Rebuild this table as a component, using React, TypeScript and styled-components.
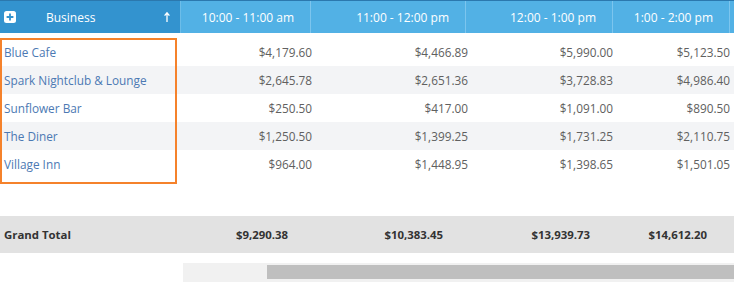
import styled, { createGlobalStyle } from "styled-components";

const GlobalStyle = createGlobalStyle`
  html, body {
    margin: 0;
    padding: 0;
    background: #ffffff;
    font-family: "Open Sans", "Liberation Sans", sans-serif;
  }
`;

const HEAD_COLS = "181px 130px 155px 147px 117px 1fr";
const BODY_COLS = "181px 131px 156px 145px 117px 1fr";

const hours = ["10:00 - 11:00 am", "11:00 - 12:00 pm", "12:00 - 1:00 pm", "1:00 - 2:00 pm"];

const rows = [
  { name: "Blue Cafe", values: ["$4,179.60", "$4,466.89", "$5,990.00", "$5,123.50"] },
  { name: "Spark Nightclub & Lounge", values: ["$2,645.78", "$2,651.36", "$3,728.83", "$4,986.40"] },
  { name: "Sunflower Bar", values: ["$250.50", "$417.00", "$1,091.00", "$890.50"] },
  { name: "The Diner", values: ["$1,250.50", "$1,399.25", "$1,731.25", "$2,110.75"] },
  { name: "Village Inn", values: ["$964.00", "$1,448.95", "$1,398.65", "$1,501.05"] }
];

const totals = ["$9,290.38", "$10,383.45", "$13,939.73", "$14,612.20"];

export default function App() {
  return (
    <>
      <GlobalStyle />
      <Page>
        <HeaderRow>
          <BusinessHead>
            <PlusIcon viewBox="0 0 12 12">
              <rect x="0" y="0" width="12" height="12" rx="2.5" fill="#ffffff" />
              <path d="M6 2.6v6.8M2.6 6h6.8" stroke="#3393cf" strokeWidth="1.8" />
            </PlusIcon>
            <HeadLabel>Business</HeadLabel>
            <SortArrow viewBox="0 0 8 12">
              <path d="M4 11V2.5M1.6 4.6L4 1.8l2.4 2.8" stroke="#ffffff" strokeWidth="1.3" fill="none" />
            </SortArrow>
          </BusinessHead>
          {hours.map((h) => (
            <HourHead key={h}>{h}</HourHead>
          ))}
          <HourHead />
        </HeaderRow>

        <Body>
          {rows.map((r, i) => (
            <DataRow key={r.name} $striped={i % 2 === 1}>
              <NameCell>{r.name}</NameCell>
              {r.values.map((v, j) => (
                <ValueCell key={j}>{v}</ValueCell>
              ))}
              <span />
            </DataRow>
          ))}
          <Highlight />
        </Body>

        <TotalRow>
          <TotalLabel>Grand Total</TotalLabel>
          {totals.map((t) => (
            <TotalValue key={t}>{t}</TotalValue>
          ))}
          <span />
        </TotalRow>

        <ScrollTrack>
          <ScrollThumb />
        </ScrollTrack>
      </Page>
    </>
  );
}

const Page = styled.div`
  width: 734px;
  height: 306px;
  overflow: hidden;
  background: #ffffff;
`;

const HeaderRow = styled.div`
  display: grid;
  grid-template-columns: ${HEAD_COLS};
  height: 33px;
  border-top: 1px solid #2b78ae;
  background: #52b1e5;
  box-sizing: border-box;
  color: #ffffff;
  font-size: 12px;
`;

const BusinessHead = styled.div`
  display: flex;
  align-items: center;
  padding: 0 9px 0 4px;
  background: #3393cf;
  border-right: 1px solid #6cbde9;
`;

const PlusIcon = styled.svg`
  width: 12px;
  height: 12px;
  flex: none;
`;

const HeadLabel = styled.span`
  flex: 1;
  padding-left: 30px;
`;

const SortArrow = styled.svg`
  width: 8px;
  height: 12px;
  flex: none;
`;

const HourHead = styled.div`
  display: flex;
  align-items: center;
  justify-content: flex-end;
  padding-right: 16px;
  border-right: 1px solid #7cc5ee;
  white-space: nowrap;
`;

const Body = styled.div`
  position: relative;
  margin-top: 5px;
`;

const DataRow = styled.div<{ $striped: boolean }>`
  display: grid;
  grid-template-columns: ${BODY_COLS};
  height: 28px;
  align-items: center;
  font-size: 11.8px;
  background: ${(p) => (p.$striped ? "#f3f4f6" : "#ffffff")};
`;

const NameCell = styled.div`
  padding-left: 4px;
  color: #4c79b3;
  white-space: nowrap;
`;

const ValueCell = styled.div`
  text-align: right;
  color: #606060;
  white-space: nowrap;
`;

const Highlight = styled.div`
  position: absolute;
  left: 0;
  top: 0;
  width: 177px;
  height: 146px;
  box-sizing: border-box;
  border: 2.5px solid #f5822b;
  pointer-events: none;
`;

const TotalRow = styled.div`
  display: grid;
  grid-template-columns: ${HEAD_COLS};
  height: 37px;
  margin-top: 38px;
  align-items: center;
  background: #e2e2e2;
  font-size: 11.4px;
  font-weight: 700;
  color: #333333;
`;

const TotalLabel = styled.div`
  padding-left: 4px;
`;

const TotalValue = styled.div`
  text-align: right;
  padding-right: 23px;
  white-space: nowrap;
`;

const ScrollTrack = styled.div`
  display: flex;
  height: 19px;
  margin: 10px 0 0 183px;
  padding: 2px 0 3px 84px;
  box-sizing: border-box;
  background: #f1f1f1;
`;

const ScrollThumb = styled.div`
  flex: 1;
  background: #bfbfbf;
`;
